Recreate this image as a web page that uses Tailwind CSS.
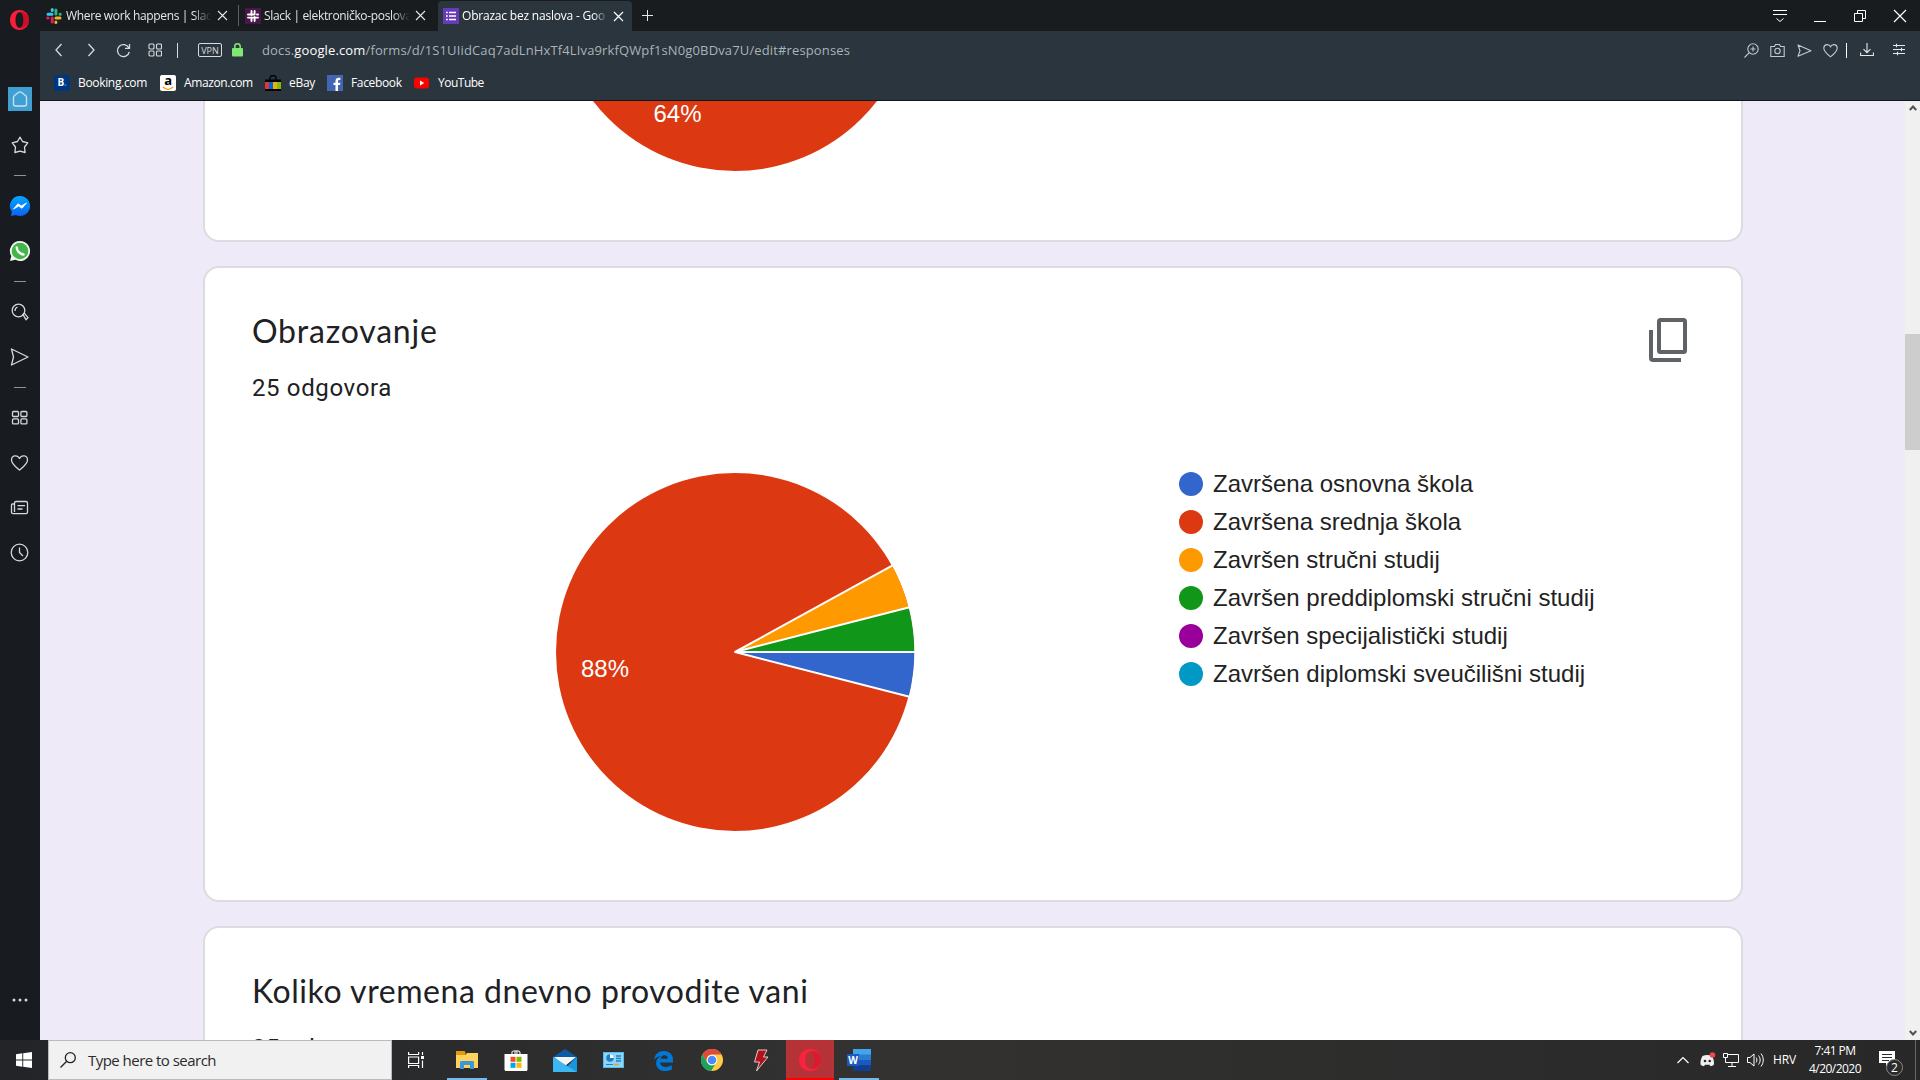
<!DOCTYPE html>
<html lang="hr">
<head>
<meta charset="utf-8">
<title>Obrazac bez naslova</title>
<script src="https://cdn.jsdelivr.net/npm/@tailwindcss/browser@4"></script>
</head>
<body class="flex h-[1080px] w-[1920px] flex-col overflow-hidden font-['Open_Sans',sans-serif]">
<div class="flex h-[1040px]">

  <!-- Opera sidebar -->
  <aside class="flex w-10 shrink-0 flex-col items-center bg-[#181b20] text-[#d5d9dc]">
    <svg class="mt-2 size-6 shrink-0" viewBox="0 0 24 24"><path fill="#fa1e38" fill-rule="evenodd" d="M11.5 2C6 2 2 6.3 2 12s4 10 9.500 10S21 17.700 21 12 17 2 11.500 2zm0 2.200c2.300 0 4 3.200 4 7.800s-1.700 7.800-4 7.800-4-3.200-4-7.800 1.700-7.800 4-7.800z"/><path fill="#a70014" d="M11.500 4.200c2.300 0 4 3.200 4 7.800s-1.700 7.800-4 7.800c2 .8 4.500.2 6.500-1.700 2-2 3-4 3-6.100s-1-4.300-3-6.200c-2-1.800-4.500-2.400-6.500-1.600z" opacity=".55"/></svg>
    <div class="mt-[55px] flex size-6 shrink-0 items-center justify-center bg-[#409fd3]">
      <svg class="size-6" viewBox="0 0 24 24" fill="none" stroke="#cfe3ef" stroke-width="1.3" stroke-linejoin="round"><path d="M5.500 10.500c0-1 .4-1.600 1-2.100l4.300-3.200c.8-.5 1.600-.5 2.400 0l4.300 3.200c.6.5 1 1.100 1 2.100v6.500c0 1.300-.7 2-2 2h-9c-1.300 0-2-.7-2-2z"/></svg>
    </div>
    <svg class="mt-[22px] size-6 shrink-0" viewBox="0 0 24 24" fill="none" stroke="currentColor" stroke-width="1.300" stroke-linejoin="round"><path d="M12 4.200l2.500 4.300 5.300 1.300-3.300 4.200.6 5.500L12 18.200l-5.100 1.300.6-5.500-3.300-4.200 5.300-1.300z"/></svg>
    <div class="mt-[18px] h-px w-3 shrink-0 bg-[#8b949a]"></div>
    <svg class="mt-[18px] size-6 shrink-0" viewBox="0 0 24 24"><defs><linearGradient id="ms" x1="0" y1="0" x2="0" y2="1"><stop offset="0" stop-color="#00a8ff"/><stop offset="1" stop-color="#0a62f5"/></linearGradient></defs><path fill="url(#ms)" d="M12 2a10 10 0 1 1-4.300 19L3 22l.8-4.200A10 10 0 0 1 12 2z"/><path fill="#fff" stroke="#fff" stroke-width=".8" stroke-linejoin="round" d="M5.500 15l4.500-5.300 3.300 2.200 5.200-2.900-4.500 5.300-3.300-2.200z"/></svg>
    <svg class="mt-[21px] size-6 shrink-0" viewBox="0 0 24 24"><path fill="#f3f5f4" d="M12 2a10 10 0 1 1-4.700 18.800L2 22l1.300-5A10 10 0 0 1 12 2z"/><circle cx="12" cy="12" r="8.300" fill="#43b649"/><path fill="none" stroke="#fff" stroke-width="2.400" stroke-linecap="round" d="M8.700 8.500c.2 3.500 3 6.600 6.800 7"/></svg>
    <div class="mt-[18px] h-px w-3 shrink-0 bg-[#8b949a]"></div>
    <svg class="mt-[18px] size-6 shrink-0" viewBox="0 0 24 24" fill="none" stroke="currentColor" stroke-width="1.300"><circle cx="10.500" cy="10.500" r="6.300"/><path d="M7 11c0-2 .8-3.300 2.500-4M15 14.500l1.300-1.300 3.700 4.400-2 2z"/></svg>
    <svg class="mt-[21px] size-6 shrink-0" viewBox="0 0 24 24" fill="none" stroke="currentColor" stroke-width="1.300" stroke-linejoin="round"><path d="M3.500 4L20 12 3.500 20l2-8z"/></svg>
    <div class="mt-[18px] h-px w-3 shrink-0 bg-[#8b949a]"></div>
    <svg class="mt-[18px] size-6 shrink-0" viewBox="0 0 24 24" fill="none" stroke="currentColor" stroke-width="1.300"><rect x="4.500" y="5.500" width="6" height="5" rx="1"/><rect x="12.900" y="5.500" width="6" height="5" rx="1"/><rect x="4.500" y="12.900" width="6" height="5" rx="1"/><rect x="12.900" y="12.900" width="6" height="5" rx="1"/></svg>
    <svg class="mt-[21px] size-6 shrink-0" viewBox="0 0 24 24" fill="none" stroke="currentColor" stroke-width="1.300" stroke-linejoin="round"><path d="M11.500 19C8 16 3.500 13 3.500 9c0-5 6-5.500 8-1.500 2-4 8-3.500 8 1.500 0 4-4.500 7-8 10z"/></svg>
    <svg class="mt-[21px] size-6 shrink-0" viewBox="0 0 24 24" fill="none" stroke="currentColor" stroke-width="1.300"><path d="M6.500 16V7c0-.9.400-1.500 1.500-1.500h10c1 0 1.500.6 1.500 1.500v9c0 1-.5 1.600-1.500 1.600H5c-1 0-1.500-.6-1.500-1.600V9c0-.6.400-1 1-1h2M9.500 9.700H17M9.500 13h5"/></svg>
    <svg class="mt-[21px] size-6 shrink-0" viewBox="0 0 24 24" fill="none" stroke="currentColor" stroke-width="1.300"><circle cx="11.500" cy="11.500" r="8.300"/><path d="M11.500 6.500v5l3.500 3.500"/></svg>
    <svg class="mt-auto mb-7 size-6 shrink-0" viewBox="0 0 24 24" fill="currentColor"><circle cx="6" cy="12" r="1.500"/><circle cx="12" cy="12" r="1.500"/><circle cx="18" cy="12" r="1.500"/></svg>
  </aside>

  <div class="flex w-[1880px] flex-col">
    <!-- Tab strip -->
    <div class="flex h-[31px] items-center bg-[#191c1f] text-xs text-[#e4e6e7]">
      <div class="flex h-[31px] w-[198px] items-center pl-1.5">
        <svg class="size-4 shrink-0" viewBox="0 0 16 16"><g stroke-width="3" stroke-linecap="round"><path stroke="#36c5f0" d="M2 6.200h4M6.200 1.600v1"/><path stroke="#2eb67d" d="M9.900 2v4M14 6.200h.3"/><path stroke="#ecb22e" d="M10 9.900h4M9.900 14v.4"/><path stroke="#e01e5a" d="M6.200 10v4M1.700 9.900h.3"/></g></svg>
        <span class="ml-1 w-[145px] overflow-hidden whitespace-nowrap tracking-[-0.35px] [mask-image:linear-gradient(to_right,black_88%,transparent)]">Where work happens | Slac</span>
        <svg class="ml-1.5 size-[11px] shrink-0" viewBox="0 0 11 11" stroke="currentColor" stroke-width="1.100"><path d="M1 1l9 9M10 1l-9 9"/></svg>
      </div>
      <div class="h-[21px] w-px bg-[#5c6064]"></div>
      <div class="flex h-[31px] w-[199px] items-center pl-1.5">
        <svg class="size-4 shrink-0" viewBox="0 0 16 16"><path fill="#4a154b" d="M0 0h16v16H0z"/><path d="M3 6.500h6M7 9.600h6M6.500 3v4M6.500 9.500V13M9.600 3v3.500M9.600 9v4M3 9.600h3M12 6.500h1" stroke="#fff" stroke-width="1.900" stroke-linecap="round"/></svg>
        <span class="ml-[3px] w-[146px] overflow-hidden whitespace-nowrap tracking-[-0.34px] [mask-image:linear-gradient(to_right,black_88%,transparent)]">Slack | elektroničko-poslova</span>
        <svg class="ml-[5px] size-[11px] shrink-0" viewBox="0 0 11 11" stroke="currentColor" stroke-width="1.100"><path d="M1 1l9 9M10 1l-9 9"/></svg>
      </div>
      <div class="mt-px flex h-[30px] w-[194px] items-center rounded-t bg-[#2b353d] pl-[5px] text-white">
        <svg class="size-4 shrink-0" viewBox="0 0 16 16"><path fill="#673ab7" d="M0 0h16v16H0z"/><path stroke="#fff" stroke-width="1.600" d="M3 4.500h1.800M6 4.500h7M3 8h1.800M6 8h7M3 11.500h1.800M6 11.500h7"/></svg>
        <span class="ml-[3px] w-[146px] overflow-hidden whitespace-nowrap tracking-[-0.2px] [mask-image:linear-gradient(to_right,black_90%,transparent)]">Obrazac bez naslova - Goo</span>
        <svg class="ml-[5px] size-[11px] shrink-0" viewBox="0 0 11 11" stroke="currentColor" stroke-width="1.200"><path d="M1 1l9 9M10 1l-9 9"/></svg>
      </div>
      <svg class="ml-2.5 size-[11px]" viewBox="0 0 11 11" stroke="currentColor" stroke-width="1"><path d="M5.500 0v11M0 5.500h11"/></svg>
      <div class="mr-[13px] ml-auto flex items-center gap-[26px]">
        <svg class="h-3.5 w-3.5" viewBox="0 0 14 14" fill="none" stroke="#fff"><path d="M0 1.500h14M0 5.500h14M3.500 9.500L7 12.500l3.500-3"/></svg>
        <svg class="h-3.5 w-3.5" viewBox="0 0 14 14" fill="none" stroke="#fff"><path d="M1 12.500h12"/></svg>
        <svg class="h-3.5 w-3.5" viewBox="0 0 14 14" fill="none" stroke="#fff"><path d="M1.500 4.500h8v8h-8zM4.500 4.500v-3h8v8h-3"/></svg>
        <svg class="h-3.5 w-3.5" viewBox="0 0 14 14" fill="none" stroke="#fff" stroke-width="1.200"><path d="M1 1l12 12M13 1L1 13"/></svg>
      </div>
    </div>

    <!-- Address bar -->
    <div class="flex h-[38px] items-center bg-[#2b353d] text-[#d7dcdf]">
      <svg class="ml-[15px] h-3.5 w-2" viewBox="0 0 8 14" fill="none" stroke="currentColor" stroke-width="1.300"><path d="M6.500 1L1 7l5.500 6"/></svg>
      <svg class="ml-6 h-3.5 w-2" viewBox="0 0 8 14" fill="none" stroke="currentColor" stroke-width="1.300"><path d="M1.500 1L7 7l-5.500 6"/></svg>
      <svg class="ml-[21px] size-[15px]" viewBox="0 0 15 15" fill="none" stroke="currentColor" stroke-width="1.300"><path d="M12.800 4.800A6 6 0 1 0 13.300 9M13.500 1v4.300H9"/></svg>
      <svg class="ml-[17px] size-3.5" viewBox="0 0 14 14" fill="none" stroke="currentColor" stroke-width="1.100"><rect x="1" y="1" width="5" height="5" rx="1"/><rect x="8.500" y="1" width="5" height="5" rx="1"/><rect x="1" y="8" width="5" height="5" rx="1"/><rect x="8.500" y="8" width="5" height="5" rx="1"/></svg>
      <div class="ml-[15px] h-[15px] w-px bg-[#d7dcdf]"></div>
      <div class="ml-5 flex h-3.5 w-6 items-center justify-center rounded-xs border border-current text-[9px] leading-none">VPN</div>
      <svg class="ml-2.5 h-3.5 w-[11px]" viewBox="0 0 11 14"><path fill="none" stroke="#80e873" stroke-width="1.500" d="M2.800 7V3.500a2.700 2.700 0 0 1 5.400 0V7"/><rect y="5" width="11" height="8.500" rx="1" fill="#80e873"/></svg>
      <div class="ml-[19px] pt-0.5 text-[13px] tracking-[0.135px] whitespace-nowrap text-[#a9b3ba]">docs.<span class="text-white">google.com</span>/forms/d/1S1UIidCaq7adLnHxTf4LIva9rkfQWpf1sN0g0BDva7U/edit#responses</div>
      <div class="mr-[14px] ml-auto flex items-center text-[#c3c9cd]">
        <svg class="size-[15px]" viewBox="0 0 15 15" fill="none" stroke="currentColor" stroke-width="1.100"><circle cx="9" cy="6" r="5.200"/><path d="M5.300 9.700L.5 14.500M6.500 6h5M9 3.500v5"/></svg>
        <svg class="ml-[11px] size-[15px]" viewBox="0 0 15 15" fill="none" stroke="currentColor" stroke-width="1.100"><path d="M.8 3.500h3.700l1-2h4l1 2h3.700v10H.8z"/><circle cx="7.500" cy="8" r="2.700"/></svg>
        <svg class="ml-3 size-[15px]" viewBox="0 0 15 15" fill="none" stroke="currentColor" stroke-width="1.100" stroke-linejoin="round"><path d="M1 2l13 5.700L1 13.300l2-5.600z"/></svg>
        <svg class="ml-[11px] size-[15px]" viewBox="0 0 15 15" fill="none" stroke="currentColor" stroke-width="1.100"><path d="M7.500 13.800C4 11 .8 8.500.8 5.200c0-4.400 5.200-4.600 6.700-1.400 1.500-3.200 6.700-3 6.700 1.400 0 3.300-3.200 5.800-6.700 8.600z"/></svg>
        <div class="ml-2 h-[15px] w-px bg-white"></div>
        <svg class="ml-[13px] size-3.5 text-[#e5e8ea]" viewBox="0 0 14 14" fill="none" stroke="currentColor" stroke-width="1.100"><path d="M7 0v9.500M3.500 6.200L7 9.700l3.500-3.500M.6 9.500v3h12.800v-3"/></svg>
        <svg class="ml-[18px] size-3.5 text-[#e5e8ea]" viewBox="0 0 14 14" fill="none" stroke="currentColor" stroke-width="1.100"><path d="M1 2.500h12M1 6.500h12M1 10.500h12M4.500.8v3.400M9.500 4.800v3.400M5.500 8.800v3.400"/></svg>
      </div>
    </div>

    <!-- Bookmarks -->
    <div class="flex h-8 items-center border-b border-[#12161a] bg-[#2b353d] pb-[3px] text-xs text-white">
      <div class="ml-3.5 flex w-[106px] items-center gap-2 tracking-[-0.33px]"><span class="flex size-4 items-center justify-center rounded-xs bg-[#003580] text-[10px] font-bold">B<span class="text-[#00a2e8]">.</span></span>Booking.com</div>
      <div class="flex w-[105px] items-center gap-2 tracking-[-0.4px]"><span class="flex size-4 flex-col items-center rounded-xs bg-white"><b class="text-[13px] leading-[11px] text-black">a</b><svg class="h-[5px] w-3" viewBox="0 0 12 5"><path d="M1 1c3 3 7 3 10 0" fill="none" stroke="#f90" stroke-width="1.500"/></svg></span>Amazon.com</div>
      <div class="flex w-[62px] items-center gap-2 tracking-[-0.3px]"><svg class="size-4" viewBox="0 0 16 16"><path d="M5 5V3a3 2.500 0 0 1 6 0v2" fill="none" stroke="#000" stroke-width="1.300"/><path d="M0 4.500h16V16H0z"/><path fill="#e53238" d="M0 7h4v7H0z"/><path fill="#0064d2" d="M4 7h4v7H4z"/><path fill="#f5af02" d="M8 7h4v7H8z"/><path fill="#86b817" d="M12 7h4v7h-4z"/></svg>eBay</div>
      <div class="flex w-[87px] items-center gap-2 tracking-[-0.35px]"><svg class="size-4" viewBox="0 0 16 16"><path fill="#4267b2" d="M0 0h16v16H0z"/><path fill="#fff" d="M8.500 16v-6H6.500V7.700h2V6c0-2.100 1.200-3.300 3.100-3.300.9 0 1.700.1 1.700.1v2.100h-1c-1 0-1.300.6-1.300 1.300v1.500h2.300L13 10h-2v6z"/></svg>Facebook</div>
      <div class="flex items-center gap-2 tracking-[-0.5px]"><svg class="size-4" viewBox="0 0 16 16"><rect y="2.500" width="15" height="11" rx="3" fill="#f00"/><path fill="#fff" d="M6 5.500v5L10.300 8z"/></svg>YouTube</div>
    </div>

    <!-- Form responses -->
    <div class="flex h-[939px] bg-[#eeeaf8]">
      <main class="ml-[163px] flex h-[939px] w-[1540px] flex-col gap-6 overflow-hidden text-[#202124]">
        <section class="h-[141px] shrink-0 rounded-b-2xl border-2 border-t-0 border-[#dadce0] bg-white pl-[350px]">
          <svg class="h-[70px] w-[360px]" viewBox="-180 109 360 70"><circle r="179" fill="#dc3912"/><text x="-57.500" y="130" text-anchor="middle" font-size="24" fill="#fff" class="font-['Liberation_Sans',Arial,sans-serif]">64%</text></svg>
        </section>

        <section class="flex h-[636px] shrink-0 flex-col rounded-2xl border-2 border-[#dadce0] bg-white">
          <div class="flex h-[202px] items-start justify-between pt-[43px] pr-[54px] pl-[47px]">
            <div>
              <h2 class="font-['Lato',sans-serif] text-[32px] leading-10 tracking-[0.8px]">Obrazovanje</h2>
              <p class="mt-[19px] font-['Roboto',sans-serif] text-2xl leading-9 tracking-[0.63px]">25 odgovora</p>
            </div>
            <svg class="mt-[7px] h-11 w-[38px]" viewBox="0 0 38 44" fill="none" stroke="#5f6368" stroke-width="4"><rect x="10" y="2" width="26" height="32" rx="1.500"/><path d="M2 12v28c0 1.200.8 2 2 2h28"/></svg>
          </div>
          <div class="flex pl-[350px]">
            <svg class="size-[364px]" viewBox="-180 -182 364 364">
              <circle r="179" fill="#dc3912"/>
              <path fill="#36c" d="M0 0H179.300A179.300 179.300 0 0 1 173.660 44.590Z"/>
              <path fill="#109618" d="M0 0L173.660 -44.590A179.300 179.300 0 0 1 179.300 0Z"/>
              <path fill="#f90" d="M0 0L157.120 -86.370A179.300 179.300 0 0 1 173.660 -44.590Z"/>
              <path fill="none" stroke="#fff" stroke-width="2" stroke-linejoin="round" d="M174.500 44.800L0 0H181M0 0L174.500 -44.800M0 0L158.500 -87.100"/>
              <text x="-130" y="25" text-anchor="middle" font-size="24" fill="#fff" class="font-['Liberation_Sans',Arial,sans-serif]">88%</text>
            </svg>
            <ul class="-mt-[5px] ml-[260px] flex flex-col font-['Liberation_Sans',Arial,sans-serif] text-2xl leading-[38px] text-[#222]">
              <li class="flex h-[38px] items-center gap-2.5"><i class="size-6 rounded-full bg-[#3366cc]"></i>Završena osnovna škola</li>
              <li class="flex h-[38px] items-center gap-2.5"><i class="size-6 rounded-full bg-[#dc3912]"></i>Završena srednja škola</li>
              <li class="flex h-[38px] items-center gap-2.5"><i class="size-6 rounded-full bg-[#ff9900]"></i>Završen stručni studij</li>
              <li class="flex h-[38px] items-center gap-2.5"><i class="size-6 rounded-full bg-[#109618]"></i>Završen preddiplomski stručni studij</li>
              <li class="flex h-[38px] items-center gap-2.5"><i class="size-6 rounded-full bg-[#990099]"></i>Završen specijalistički studij</li>
              <li class="flex h-[38px] items-center gap-2.5"><i class="size-6 rounded-full bg-[#0099c6]"></i>Završen diplomski sveučilišni studij</li>
            </ul>
          </div>
        </section>

        <section class="h-[636px] shrink-0 rounded-2xl border-2 border-[#dadce0] bg-white pt-[43px] pl-[47px]">
          <h2 class="font-['Lato',sans-serif] text-[32px] leading-10 tracking-[0.55px]">Koliko vremena dnevno provodite vani</h2>
          <p class="mt-[19px] font-['Roboto',sans-serif] text-2xl leading-9 tracking-[0.63px]">25 odgovora</p>
        </section>
      </main>
      <div class="ml-auto flex w-[15px] flex-col items-center bg-[#f0f0f0]">
        <svg class="mt-[3px] h-2 w-2" viewBox="0 0 8 8" fill="none" stroke="#505050" stroke-width="2"><path d="M.8 6L4 2.500 7.200 6"/></svg>
        <div class="mt-[222px] h-[116px] w-[15px] bg-[#cdcdcd]"></div>
        <svg class="mt-auto mb-[3px] h-2 w-2" viewBox="0 0 8 8" fill="none" stroke="#505050" stroke-width="2"><path d="M.8 2L4 5.500 7.200 2"/></svg>
      </div>
    </div>
  </div>
</div>

<!-- Windows taskbar -->
<footer class="flex h-10 items-center bg-linear-to-r from-[#222428] via-[#333231] via-45% to-[#282828] text-white">
  <div class="flex w-12 justify-center"><svg class="size-4" viewBox="0 0 16 16" fill="#fff"><path d="M0 2.200L6.300 1.300V7.500H0zM7.200 1.200L16 0V7.500H7.200zM0 8.500H6.300V14.700L0 13.800zM7.200 8.500H16V16L7.200 14.800z"/></svg></div>
  <div class="flex h-10 w-[344px] items-center border border-[#b9b9b9] bg-[#f1f1f1] pl-[11px] text-[15px] tracking-[-0.53px] text-[#2b2b2b]">
    <svg class="size-4" viewBox="0 0 16 16" fill="none" stroke="#222" stroke-width="1.300"><circle cx="10.300" cy="5.700" r="5"/><path d="M6.700 9.300L.5 15.500"/></svg>
    <span class="ml-3">Type here to search</span>
  </div>
  <div class="flex h-10 w-12 items-center justify-center"><svg class="h-4 w-4" viewBox="0 0 16 16" fill="none" stroke="#fff" stroke-width="1.200"><path d="M.6 0v2.500h10V0M.6 5h10v6.500H.600zM.6 16v-2.500h10V16M14.500 0v3M14.500 8.500V16"/><path fill="#fff" stroke="none" d="M13 4h3v3h-3z"/></svg></div>
  <div class="flex h-10 w-[54px] items-center justify-center"><div class="flex h-10 w-10 flex-col items-center border-b-2 border-[#76b9ed]">
    <svg class="mt-[11px] h-[18px] w-[22px]" viewBox="0 0 22 18"><path fill="#e39b0b" d="M0 0h8.500l1 1.500V5H0z"/><path fill="#fdd35e" d="M0 4h9.500l1.500-2h11v15H0z"/><path fill="#3a96dd" d="M4 18v-6.500c0-.9.6-1.500 1.500-1.500h11c.9 0 1.500.6 1.500 1.500V18h-4v-4H8v4z"/></svg></div></div>
  <div class="flex w-[43px] justify-center"><svg class="h-6 w-6" viewBox="0 0 24 24"><path d="M8 8V4a3 2.800 0 0 1 5 0v4M11 6V3.500a3 2.500 0 0 1 5 1V8" fill="none" stroke="#e8e8e8" stroke-width="1.200"/><path fill="#fff" d="M.5 6h23v15.500c0 .8-.5 1.500-1.500 1.500H2c-1 0-1.500-.7-1.500-1.500z"/><path fill="#f25022" d="M6.500 8.800h5v5h-5z"/><path fill="#7fba00" d="M12.500 8.800h5v5h-5z"/><path fill="#00a4ef" d="M6.500 14.800h5v5h-5z"/><path fill="#ffb900" d="M12.500 14.800h5v5h-5z"/></svg></div>
  <div class="flex w-[55px] justify-center"><svg class="h-[23px] w-6" viewBox="0 0 24 23"><path fill="#0a5ba6" d="M0 8L12 0l12 8v5H0z"/><path fill="#f4f4f4" d="M1 8h22L12 17z"/><path fill="#1a95df" d="M24 8v15H8z"/><path fill="#3bb8f3" d="M0 23V8l12 7.500L24 23z"/></svg></div>
  <div class="flex w-[43px] justify-center"><svg class="h-4 w-[21px]" viewBox="0 0 21 16"><path fill="#55bdf0" d="M0 0h21v16H0z"/><path fill="#8fd5f8" d="M1 1h19v14H1z"/><circle cx="7" cy="6" r="3.800" fill="#1f7fc4"/><path fill="#fff" d="M7 6V2.200A3.800 3.800 0 0 1 10.800 6z"/><path stroke="#1f7fc4" stroke-width="1.300" d="M13 4h5M13 6.500h5M13 9h5"/><path stroke="#1f7fc4" d="M3 12.500h7"/><path stroke="#f29a1f" stroke-width="1.500" d="M11 12.500h5"/></svg></div>
  <div class="flex w-14 justify-center"><svg class="size-[21px]" viewBox="0 0 22 22"><path fill="#0078d7" d="M1 10.500C2 4 6 1 11.500 1 17 1 21 4.800 21 10.500V13H7.500c.3 3.500 3.300 4.700 6.200 4.700 2.300 0 4.500-.7 6-1.600v4.300C18 21.400 15.500 22 12.800 22 7 22 3.300 18.500 3.300 13.800c0-3.400 2-6 5-7.400C4.800 7 2.400 8.500 1 10.500zM8 9.200h7.500c0-2-1-3.700-3.500-3.700-2.300 0-3.700 1.700-4 3.700z"/></svg></div>
  <div class="flex w-[42px] justify-center"><svg class="size-[22px]" viewBox="0 0 22 22"><circle cx="11" cy="11" r="11" fill="#fc4"/><path fill="#de4a3c" d="M11 0a11 11 0 0 1 9.530 5.500H11a5.500 5.500 0 0 0-4.760 8.250L1.470 5.500A11 11 0 0 1 11 0z"/><path fill="#1aa260" d="M1.470 5.500L6.240 13.750A5.500 5.500 0 0 0 11 16.500l3-.9L10.200 22A11 11 0 0 1 1.470 5.500z"/><circle cx="11" cy="11" r="5.300" fill="#fff"/><circle cx="11" cy="11" r="4.300" fill="#4c8bf5"/></svg></div>
  <div class="flex w-[53px] justify-center pl-0.5"><svg class="h-[23px] w-4" viewBox="0 0 16 23"><path fill="#b3121d" stroke="#e6dede" stroke-width=".9" d="M5 1h9l-3.500 7H15L3.500 22l3-9H1.500z"/></svg></div>
  <div class="flex h-10 w-12 items-center justify-center border-b-2 border-[#f00] bg-[#b53337]"><svg class="mt-0.5 h-[22px] w-[22px]" viewBox="0 0 22 22"><path fill="#f8233c" fill-rule="evenodd" d="M11 0C4.800 0 0 4.800 0 11s4.800 11 11 11 11-4.800 11-11S17.200 0 11 0zm0 2.500c2.600 0 4.600 3.500 4.600 8.500s-2 8.500-4.600 8.500S6.400 16 6.400 11 8.400 2.500 11 2.500z"/><path fill="#b5091c" opacity=".4" d="M11 2.500c2.600 0 4.600 3.500 4.600 8.500s-2 8.500-4.600 8.500c3 1 6 0 8-2 1.900-2 3-4 3-6.500s-1-4.500-3-6.500-5-3-8-2z"/></svg></div>
  <div class="flex h-10 w-[50px] items-center justify-center"><div class="flex h-10 w-10 flex-col items-center border-b-2 border-[#76b9ed]">
    <svg class="mt-[9px] h-[22px] w-6" viewBox="0 0 24 22"><path fill="#41a5ee" d="M6 0h18v6H6z"/><path fill="#2b7cd3" d="M6 5.500h18V11H6z"/><path fill="#185abd" d="M6 11h18v5.500H6z"/><path fill="#103f91" d="M6 16.500h18V22H6z"/><path fill="#185abd" d="M0 5h12v12H0z"/><text x="6" y="14.700" text-anchor="middle" font-size="10" font-weight="700" fill="#fff">W</text></svg></div></div>

  <!-- System tray -->
  <div class="mr-1 ml-auto flex h-10 items-center text-xs">
    <svg class="h-2 w-3" viewBox="0 0 12 8" fill="none" stroke="#fff" stroke-width="1.200"><path d="M.5 7L6 1.500 11.500 7"/></svg>
    <svg class="ml-[11px] h-4 w-4" viewBox="0 0 16 16"><path fill="#f0f0f0" d="M2.500 4C5.500 2.700 9 2.700 12 4c1.500 2.500 2.200 5.500 2 8.500-1 1-2.300 1.500-3.500 1.800l-1-1.500h-4.500l-1 1.500C2.700 14 1.500 13.500.5 12.500.3 9.500 1 6.500 2.500 4z"/><circle cx="5" cy="9" r="1.300" fill="#2b2b2b"/><circle cx="9.700" cy="9" r="1.300" fill="#2b2b2b"/><circle cx="12.500" cy="3" r="2.800" fill="#f04747"/></svg>
    <svg class="ml-[7px] h-4 w-4" viewBox="0 0 16 16" fill="none" stroke="#fff"><path d="M4.500 2.500h11v8H2.500V7M.5 1.500h4v4h-4zM2.500 5.500V8M9 10.500v4M5 14.500h8"/></svg>
    <svg class="ml-2 h-4 w-[17px]" viewBox="0 0 17 16" fill="none" stroke="#fff"><path d="M.5 5.500H3l4-3.500v12L3 10.500H.5zM9 5.500c1.200 1.500 1.200 3.500 0 5M11.500 3.500c2.200 2.800 2.200 6.200 0 9M14 1.500c3 4 3 9 0 13"/></svg>
    <span class="ml-[9px] w-[23px] tracking-[-0.14px]">HRV</span>
    <div class="ml-2.5 flex w-[58px] flex-col items-center leading-[18px] tracking-[-0.54px]"><span>7:41 PM</span><span>4/20/2020</span></div>
    <div class="relative ml-[15px] h-[30px] w-[28px]">
      <svg class="h-4 w-4 translate-y-[6px]" viewBox="0 0 16 16"><path fill="#fff" d="M0 0h16v12H10l-3 3.500V12H0z"/><path stroke="#2a2a2a" d="M3 3.500h10M3 6.500h10M3 9.500h7"/></svg>
      <span class="absolute top-[14px] left-[7px] flex size-[17px] items-center justify-center rounded-full border border-[#8b8b8b] bg-[#2b2b2b] text-xs">2</span>
    </div>
    <div class="ml-2 h-10 w-px bg-[#6a6a6a]"></div>
  </div>
</footer>
</body>
</html>
